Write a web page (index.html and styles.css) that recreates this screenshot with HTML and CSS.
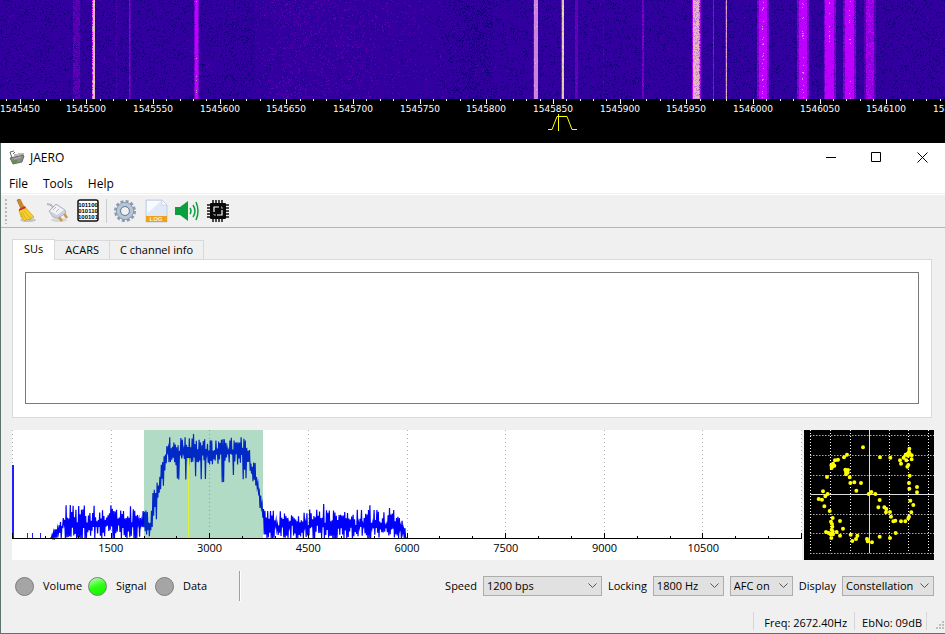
FILE: index.html
```
<!DOCTYPE html>
<html lang="en">
<head>
    <meta charset="UTF-8">
    <meta name="viewport" content="width=device-width, initial-scale=1.0">
    <title>JAERO</title>
    <link rel="stylesheet" href="styles.css">
</head>
<body>
    <div class="receiver">
        <canvas id="waterfall" class="waterfall"></canvas>
        <svg id="ruler" class="ruler">
            <path class="passband" d="M548 30.5h4l5-13h10l5 13h5M558.500 15v17"/>
        </svg>
    </div>

    <div class="window">
        <div class="titlebar">
            <svg class="app-icon" viewBox="0 0 16 16">
                <path d="M1 8l13-3 1 1-2 6-9 2z" fill="#8b8b8b" stroke="#555" stroke-width=".8"/>
                <path d="M3 11l5-1v2l-4 1z" fill="#4a9a2a"/>
                <path d="M3 8L1 2l4-1M4 4l2-2" fill="none" stroke="#666"/>
                <path d="M6 6V4M8 6V4M10 5V3M12 5V3M14 5V3" stroke="#555" stroke-width=".8"/>
                <path d="M5 9l7-2" stroke="#b5b5b5"/>
            </svg>
            <span class="title">JAERO</span>
            <div class="window-buttons">
                <button aria-label="Minimize"><svg viewBox="0 0 11 11"><path d="M1 5.500h10"/></svg></button>
                <button aria-label="Maximize"><svg viewBox="0 0 11 11"><path d="M.5.5h9v9h-9z"/></svg></button>
                <button aria-label="Close"><svg viewBox="0 0 11 11"><path d="M.5.5l10 10M10.500.5l-10 10"/></svg></button>
            </div>
        </div>

        <div class="menubar">
            <button>File</button>
            <button>Tools</button>
            <button>Help</button>
        </div>

        <div class="toolbar">
            <span class="handle"></span>
            <button aria-label="Clear">
                <svg viewBox="0 0 24 24">
                    <ellipse cx="14" cy="21" rx="8" ry="2" fill="#c4c4c4"/>
                    <path d="M3 1l3-1 4 8-3 2z" fill="#c98a2b" stroke="#94601a" stroke-width=".6"/>
                    <path d="M5 11l6-3 9 10-3 1-1 2-3-1-2 2-3-3-1-1z" fill="#f5cf2c" stroke="#c69a12" stroke-width=".7"/>
                    <path d="M8 13l4 7M10 12l6 7M7 14l2 5" stroke="#d6a916" stroke-width=".8"/>
                    <path d="M5 10l6-3 1 2-7 3z" fill="#c8362a"/>
                </svg>
            </button>
            <button aria-label="Connect">
                <svg viewBox="0 0 24 24">
                    <ellipse cx="14" cy="21" rx="8" ry="2" fill="#d6d6d6"/>
                    <path d="M2 5l4 1 3 4" fill="none" stroke="#b9bac6" stroke-width="2"/>
                    <path d="M12 16l5 6M18 13l4 6" stroke="#c7974a" stroke-width="2.500"/>
                    <path d="M4 12l7-7 9 6 1 3-8 5-5-1z" fill="#cfd0dd" stroke="#a5a6b4" stroke-width=".8"/>
                    <path d="M5 12l6-6 8 5-7 5z" fill="#f1f1f7"/>
                    <path d="M8 11l3-3M11 13l3-3" stroke="#b5b6c6"/>
                </svg>
            </button>
            <button aria-label="Raw data">
                <svg viewBox="0 0 24 24">
                    <rect x="2" y="1" width="20" height="21" rx="2" fill="#fff" stroke="#111" stroke-width="1.500"/>
                    <text class="bits" x="12" y="8">101100</text>
                    <text class="bits" x="12" y="14">010110</text>
                    <text class="bits" x="12" y="20">100101</text>
                </svg>
            </button>
            <span class="divider"></span>
            <button aria-label="Settings">
                <svg viewBox="0 0 24 24">
                    <circle cx="12" cy="12" r="9.500" fill="none" stroke="#8b9db3" stroke-width="3" stroke-dasharray="3 2"/>
                    <circle cx="12" cy="12" r="6.500" fill="none" stroke="#8094ac" stroke-width="5"/>
                    <circle cx="12" cy="12" r="6.500" fill="none" stroke="#b8c5d4" stroke-width="3.500"/>
                    <circle cx="12" cy="12" r="4.500" fill="none" stroke="#71859d"/>
                </svg>
            </button>
            <button aria-label="Log">
                <svg viewBox="0 0 24 24">
                    <path d="M2 1h16l5 5v17H2z" fill="#dfe9f8" stroke="#b8c7de" stroke-width=".8"/>
                    <path d="M3 2h14L3 15z" fill="#f7faff"/>
                    <path d="M18 1v5h5z" fill="#fff" stroke="#b8c7de" stroke-width=".6"/>
                    <path d="M2 17h21v6H2z" fill="#f0a020"/>
                    <text class="log" x="12" y="22">LOG</text>
                </svg>
            </button>
            <button aria-label="Sound">
                <svg viewBox="0 0 24 24">
                    <path d="M0 8h5l8-6v20l-8-6H0z" fill="#0a9e3c"/>
                    <path d="M15 9q2 3 0 6M18 6q4 6 0 12M21 3q4 9 0 18" fill="none" stroke="#0a9e3c" stroke-width="1.500"/>
                </svg>
            </button>
            <button aria-label="Decoder">
                <svg viewBox="0 0 24 24">
                    <path d="M7 1v22M10 1v22M13 1v22M16 1v22M1 6h22M1 9h22M1 12h22M1 15h22M1 18h22" stroke="#111" stroke-width="1.500"/>
                    <rect x="4" y="4" width="16" height="16" rx="1" fill="#0a0a0a"/>
                    <path d="M8 13V8h5M16 11v5h-5" fill="none" stroke="#fff" stroke-width="1.200"/>
                    <path d="M15 8h1v2M8 15v1h2" fill="none" stroke="#aaa"/>
                </svg>
            </button>
        </div>

        <div class="client">
            <div class="tabs">
                <div class="tablist" role="tablist">
                    <button class="tab selected" role="tab" aria-selected="true">SUs</button>
                    <button class="tab" role="tab" aria-selected="false">ACARS</button>
                    <button class="tab" role="tab" aria-selected="false">C channel info</button>
                </div>
                <div class="pane" role="tabpanel">
                    <textarea class="output" aria-label="SUs" readonly></textarea>
                </div>
            </div>

            <div class="plots">
                <div class="spectrum">
                    <canvas id="spectrum"></canvas>
                    <div class="axis-labels">
                        <span>1500</span><span>3000</span><span>4500</span><span>6000</span><span>7500</span><span>9000</span><span>10500</span>
                    </div>
                </div>
                <!-- drawn at 3 units per pixel -->
                <svg class="constellation" viewBox="42 30 390 390">
                    <path class="grid" d="M61.500 30v370M121.500 30v370M181.500 30v370M298.500 30v370M355.500 30v370M415.500 30v370M61 46.500h371M61 106.500h371M61 166.500h371M61 283.500h371M61 340.500h371M61 400.500h371"/>
                    <path class="axes" d="M238.500 30v370M61 223.500h371"/>
                    <path class="points" d="M219 82h0M171 104h0M162 112h0M144 119h0M135 121h0M129 131h0M124 136h0M133 137h0M125 144h0M129 139h0M111 171h0
                        M166 149h0M174 150h0M168 156h0M173 158h0M168 163h0M179 172h0M181 189h0M193 187h0M213 189h0M199 212h0M236 222h0M244 216h0M256 222h0
                        M99 214h0M113 222h0M106 229h0M96 239h0M86 237h0M103 259h0M119 273h0M128 294h0M123 305h0M126 312h0M127 320h0M125 329h0M128 334h0
                        M108 336h0M116 339h0M122 343h0M129 343h0M140 336h0M124 354h0M150 303h0M159 326h0M150 347h0M182 344h0M202 347h0M198 357h0M187 363h0
                        M231 357h0M233 364h0M246 367h0M269 350h0M300 354h0M317 339h0M269 240h0M265 262h0M283 262h0M289 267h0M288 277h0M300 276h0M303 290h0
                        M310 304h0M316 302h0M333 304h0M346 304h0M355 295h0M357 290h0M364 277h0M370 255h0M361 242h0M381 217h0M381 201h0M358 206h0M357 189h0
                        M359 167h0M352 140h0M355 135h0M333 131h0M330 121h0M341 113h0M349 121h0M365 118h0M347 104h0M353 101h0M358 86h0M357 95h0M365 106h0
                        M360 102h0M354 107h0M301 113h0M270 112h0"/>
                </svg>
            </div>

            <div class="controls">
                <span class="indicator volume"><i class="led"></i>Volume</span>
                <span class="indicator signal"><i class="led on"></i>Signal</span>
                <span class="indicator"><i class="led"></i>Data</span>
                <span class="rule"></span>
                <label class="first" for="speed">Speed</label>
                <select id="speed" class="speed"><option>1200 bps</option></select>
                <label for="locking">Locking</label>
                <select id="locking" class="locking"><option>1800 Hz</option></select>
                <select class="afc" aria-label="AFC"><option>AFC on</option></select>
                <label for="display">Display</label>
                <select id="display" class="display"><option>Constellation</option></select>
            </div>
        </div>

        <div class="statusbar">
            <span class="status freq">Freq: 2672.40Hz</span>
            <span class="status">EbNo: 09dB</span>
            <svg class="grip" viewBox="0 0 10 10">
                <path d="M7 0h2v2H7zM7 3h2v2H7zM4 3h2v2H4zM7 6h2v2H7zM4 6h2v2H4zM1 6h2v2H1z"/>
            </svg>
        </div>
    </div>

    <script src="script.js"></script>
</body>
</html>
```

FILE: styles.css
```
* {
    box-sizing: border-box;
}
body {
    margin: 0;
    background: #b9cfcb;
    font-family: "Open Sans", "Noto Sans", sans-serif;
    font-size: 11px;
    line-height: 16px;
    color: #000;
}
button {
    font: inherit;
    color: inherit;
    background: none;
    border: none;
    padding: 0;
}
svg, canvas {
    display: block;
}

/* waterfall */
.receiver {
    background: #000;
    overflow: hidden;
}
.waterfall {
    width: 100%;
    height: 99px;
}
.ruler {
    width: 100%;
    height: 44px;
}
.ruler text {
    fill: #fff;
    font-family: "DejaVu Sans", sans-serif;
    font-size: 9px;
    text-anchor: middle;
}
.tick {
    fill: #fff;
}
.passband {
    fill: none;
    stroke: #ff0;
}

/* window frame */
.window {
    background: #f0f0f0;
    border-left: 1px solid #5c7370;
    border-bottom: 1px solid #5c7370;
}
.titlebar {
    display: flex;
    align-items: center;
    height: 29px;
    padding-left: 8px;
    background: #fff;
}
.app-icon {
    width: 16px;
    height: 16px;
}
.title {
    flex: 1;
    margin-left: 5px;
    font-size: 12px;
}
.window-buttons {
    display: flex;
}
.window-buttons button {
    display: flex;
    justify-content: center;
    align-items: center;
    width: 46px;
    height: 29px;
}
.window-buttons svg {
    width: 11px;
    height: 11px;
    fill: none;
    stroke: #000;
}
.menubar {
    display: flex;
    gap: 15px;
    height: 22px;
    padding: 2px 0 0 8px;
    background: #fff;
    border-bottom: 1px solid #f0f0f0;
    font-size: 12px;
}
.toolbar {
    display: flex;
    align-items: center;
    gap: 7px;
    height: 34px;
    padding-left: 4px;
    border-top: 1px solid #fff;
    border-bottom: 1px solid #b5b5b5;
}
.toolbar svg {
    width: 24px;
    height: 24px;
}
.handle {
    width: 2px;
    height: 25px;
    background: repeating-linear-gradient(#b8b8b8 0 2px, #f0f0f0 2px 4px);
}
.divider {
    width: 1px;
    height: 24px;
    margin: 0 -1px;
    background: #ccc;
}
.bits {
    font: bold 6px "Liberation Sans", sans-serif;
    text-anchor: middle;
}
.log {
    font: bold 6px "Liberation Sans", sans-serif;
    fill: #fff3d0;
    text-anchor: middle;
}

/* tabs */
.client {
    padding: 11px 11px 0;
}
.tabs {
    margin-right: 2px;
}
.tablist {
    display: flex;
    align-items: flex-end;
}
.tab {
    height: 19px;
    padding: 0 10px;
    border: 1px solid #d9d9d9;
    border-left: none;
    border-bottom: none;
}
.tab.selected {
    position: relative;
    height: 21px;
    margin-bottom: -1px;
    padding: 0 11px 2px;
    border-left: 1px solid #d9d9d9;
    background: #fff;
}
.pane {
    padding: 12px 12px 13px;
    background: #fff;
    border: 1px solid #d9d9d9;
}
.output {
    display: block;
    width: 100%;
    height: 132px;
    border: 1px solid #7a7a7a;
    background: #fff;
    resize: none;
}

/* plots */
.plots {
    display: flex;
    gap: 2px;
    margin-top: 12px;
}
.spectrum {
    flex: 1;
    min-width: 0;
    height: 130px;
    background: #fff;
}
.spectrum canvas {
    width: 100%;
    height: 110px;
}
.axis-labels {
    display: flex;
    padding: 0 6.25%;
}
.axis-labels span {
    flex: 1;
    text-align: center;
}
.constellation {
    width: 130px;
    height: 130px;
    background: #000;
}
.grid {
    fill: none;
    stroke: #fff;
    stroke-width: 3;
    stroke-dasharray: 3 6;
}
.axes {
    fill: none;
    stroke: #ddd;
    stroke-width: 3;
}
.points {
    fill: none;
    stroke: #ff0;
    stroke-width: 12;
    stroke-linecap: round;
}

/* controls */
.controls {
    display: flex;
    align-items: center;
    gap: 6px;
    height: 30px;
    margin-top: 11px;
    padding-left: 3px;
}
.indicator {
    display: flex;
    align-items: center;
    gap: 9px;
}
.volume {
    width: 67px;
}
.signal {
    width: 61px;
}
.led {
    flex: none;
    width: 19px;
    height: 19px;
    border: 1px solid #7c7c7c;
    border-radius: 50%;
    background: #a5a5a5;
}
.led.on {
    background: linear-gradient(160deg, #b4ffb0 5%, #2cff10 50%, #14f000);
}
.rule {
    width: 2px;
    height: 30px;
    margin-left: 26px;
    border-left: 1px solid #a0a0a0;
    border-right: 1px solid #fff;
}
.first {
    margin-left: auto;
}
select {
    height: 20px;
    padding: 0 3px;
    border: 1px solid #adadad;
    border-radius: 0;
    appearance: none;
    background: #e1e1e1 url("data:image/svg+xml,%3Csvg xmlns='http://www.w3.org/2000/svg' width='9' height='6'%3E%3Cpath d='M.5.5l4 4 4-4' fill='none' stroke='%23555'/%3E%3C/svg%3E") no-repeat right 4px center;
    font: inherit;
    color: inherit;
}
.speed {
    width: 119px;
}
.locking {
    width: 71px;
}
.afc {
    width: 63px;
}
.display {
    width: 92px;
}

/* status bar */
.statusbar {
    display: flex;
    justify-content: flex-end;
    height: 21px;
    margin-top: 11px;
}
.status {
    height: 18px;
    padding: 3px 4px 0 7px;
    border-right: 1px solid #d7d7d7;
}
.freq {
    padding-left: 10px;
    padding-right: 7px;
    border-left: 1px solid #d7d7d7;
}
.grip {
    width: 10px;
    height: 10px;
    margin: 9px 0 0 8px;
    fill: #bfbfbf;
}
```

FILE: script.js
```
let seed = 7;
function rnd() {
    seed = (seed * 1664525 + 1013904223) % 4294967296;
    return seed / 4294967296;
}

const BASE = [50, 0, 158];
const DARK = [16, 0, 124];
const DIM = [94, 0, 182];
const MID = [140, 0, 220];
const HOT = [190, 0, 255];
const PINK = [205, 130, 222];
const PALE = [226, 184, 190];
const CREAM = [240, 220, 150];

// start x, width, colour, second colour, share of the second colour
const signals = [
    [73, 7, DIM, BASE, 0.3],
    [92, 1, HOT, PINK, 0.5],
    [93, 2, PALE, CREAM, 0.15],
    [116, 1, DIM, BASE, 0.6],
    [129, 1, MID, DIM, 0.3],
    [130, 1, DIM, BASE, 0.1],
    [194, 5, HOT, MID, 0.05],
    [194, 1, MID, DIM, 0.3],
    [198, 1, MID, DIM, 0.3],
    [196, 1, HOT, PINK, 0.08],
    [534, 4, PINK, PALE, 0.06],
    [533, 1, DIM, MID, 0.3],
    [562, 2, PALE, CREAM, 0.5],
    [561, 1, HOT, MID, 0.4],
    [575, 3, DIM, MID, 0.02],
    [603, 1, DIM, BASE, 0.8],
    [642, 2, DIM, MID, 0.4],
    [692, 1, HOT, MID, 0.3],
    [693, 6, PALE, PINK, 0.3],
    [699, 1, PINK, HOT, 0.3],
    [700, 1, MID, HOT, 0.3],
    [713, 1, MID, HOT, 0.2],
    [725, 1, MID, DIM, 0.2],
    [726, 1, PALE, PINK, 0.5],
    [757, 12, MID, DIM, 0.4],
    [759, 8, HOT, MID, 0.05],
    [762, 2, HOT, PINK, 0.15],
    [797, 12, MID, DIM, 0.4],
    [799, 8, HOT, MID, 0.05],
    [802, 2, HOT, PINK, 0.12],
    [824, 12, MID, DIM, 0.4],
    [825, 9, HOT, MID, 0.05],
    [829, 1, HOT, PINK, 0.08],
    [843, 13, MID, DIM, 0.4],
    [845, 9, HOT, MID, 0.05],
    [849, 2, HOT, PINK, 0.05],
    [864, 12, DIM, BASE, 0.2],
    [866, 8, MID, HOT, 0.25]
];

function noise(x) {
    let dark = 0.1;
    let dim = 0.002;
    if (x > 225 && x < 255) dark = 0.15;
    if (x >= 255 && x < 465) {
        // weak wide hump that fades out on the right
        dark = x < 430 ? 0.02 : 0.02 + (x - 430) * 0.005;
        dim = Math.min((x - 250) * 0.003, (465 - x) * 0.0006, 0.09);
    }
    if (x >= 465 && x < 492) dark = 0.24;
    const r = rnd();
    if (r < dark) return DARK;
    if (r < dark + dim) return DIM;
    return BASE;
}

function drawWaterfall() {
    const canvas = document.getElementById('waterfall');
    const w = canvas.width = canvas.clientWidth;
    const h = canvas.height = canvas.clientHeight;
    const ctx = canvas.getContext('2d');
    const image = ctx.createImageData(w, h);
    for (let y = 0; y < h; y++) {
        const row = [];
        for (let x = 0; x < w; x++) {
            row[x] = noise(x);
        }
        for (const [start, width, colour, other, share] of signals) {
            for (let x = start; x < start + width; x++) {
                row[x] = rnd() < share ? other : colour;
            }
        }
        for (let x = 0; x < w; x++) {
            image.data.set([...row[x], 255], (y * w + x) * 4);
        }
    }
    ctx.putImageData(image, 0, 0);
}

function drawRuler() {
    const svg = document.getElementById('ruler');
    let out = '';
    for (let i = -1; i * 40 / 3 < svg.clientWidth + 10; i++) {
        const x = Math.floor(20 + i * 40 / 3);
        const major = i % 5 === 0;
        out += `<rect class="tick" x="${x}" y="0" width="1" height="${major ? 5 : 2}"/>`;
        if (major) {
            out += `<text x="${x}" y="13">${1545450 + i * 10}</text>`;
        }
    }
    svg.insertAdjacentHTML('beforeend', out);
}

// highest and lowest level of the trace at x, measured down from the top
function envelope(x) {
    if (x < 38) return [108, 108];
    if (x < 50) return [108 - (x - 38) * 2, 112];
    if (x < 132) return [75, 112];
    if (x < 138) return [80, 108];
    if (x < 154) {
        const t = (x - 138) / 16;
        return [80 - 68 * Math.pow(t, 0.8), 108 - 62 * t];
    }
    if (x < 235) return [7, 36];
    if (x < 251) {
        const t = Math.pow((x - 235) / 16, 1.5);
        return [12 + 62 * t, 42 + 50 * t];
    }
    if (x < 386) return [79, 112];
    if (x < 394) return [82 + (x - 386) * 2, 112];
    return [108, 108];
}

function drawSpectrum() {
    const canvas = document.getElementById('spectrum');
    const w = canvas.width = canvas.clientWidth;
    const h = canvas.height = canvas.clientHeight;
    const ctx = canvas.getContext('2d');
    const scale = w / 790;
    const step = (w - 1) / 8;

    ctx.strokeStyle = '#b4b4b4';
    ctx.setLineDash([1, 3]);
    for (let i = 0; i <= 8; i++) {
        const x = Math.round(i * step) + 0.5;
        ctx.beginPath();
        ctx.moveTo(x, 0);
        ctx.lineTo(x, 108);
        ctx.stroke();
    }
    ctx.setLineDash([]);

    ctx.fillStyle = '#2020ff';
    ctx.fillRect(0, 35, 2, 73);
    for (const x of [15, 20, 28]) {
        ctx.fillRect(Math.round(x * scale), 103, 1, 5);
    }

    ctx.strokeStyle = '#0000ff';
    ctx.lineWidth = 1.2;
    ctx.beginPath();
    ctx.moveTo(38 * scale, 108);
    let up = false;
    for (let x = 38; x < 395; x += 0.7) {
        const [top, bottom] = envelope(x);
        const size = bottom - top;
        let y = up ? top + rnd() * size * 0.5 : bottom - rnd() * size * 0.5;
        if (up && rnd() < 0.06) y -= 5;
        if (!up && x > 143 && x < 240 && rnd() < 0.12) y += 17;
        ctx.lineTo(x * scale, Math.max(4, Math.min(y, 108)));
        up = !up;
    }
    ctx.stroke();

    // locking band and centre frequency
    ctx.fillStyle = 'rgba(0, 135, 65, 0.3)';
    ctx.fillRect(132 * scale, 0, 119 * scale, 108);
    ctx.fillStyle = '#d9f03c';
    ctx.fillRect(Math.round(176 * scale), 28, 1, 80);

    ctx.fillStyle = '#000';
    ctx.fillRect(0, 108, w, 1);
    for (let i = 0; i <= 24; i++) {
        const size = i % 3 === 0 ? 5 : 2;
        ctx.fillRect(Math.round(i * step / 3), 108 - size, 1, size);
    }
}

drawWaterfall();
drawRuler();
drawSpectrum();
```
